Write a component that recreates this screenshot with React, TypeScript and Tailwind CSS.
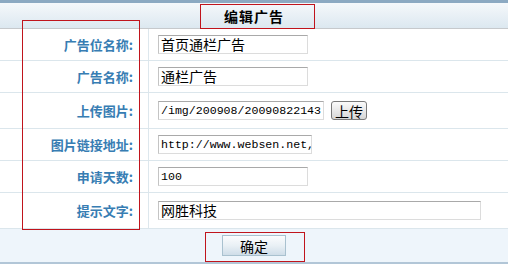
import React from "react"

const cjk = "font-['Noto_Sans_CJK_SC',sans-serif]"
const mono = "font-['Liberation_Mono','Noto_Sans_CJK_SC',monospace]"

interface Field {
  label: string
  value: string
  width: string
  latin?: boolean
  upload?: boolean
  height: string
}

const fields: Field[] = [
  { label: "广告位名称:", value: "首页通栏广告", width: "w-[150px]", height: "h-[32px]" },
  { label: "广告名称:", value: "通栏广告", width: "w-[150px]", height: "h-[32px]" },
  { label: "上传图片:", value: "/img/200908/20090822143", width: "w-[166px]", latin: true, upload: true, height: "h-[36px]" },
  { label: "图片链接地址:", value: "http://www.websen.net,", width: "w-[154px]", latin: true, height: "h-[32px]" },
  { label: "申请天数:", value: "100", width: "w-[150px]", latin: true, height: "h-[32px]" },
  { label: "提示文字:", value: "网胜科技", width: "w-[323px]", height: "h-[36px]" },
]

export default function App() {
  return (
    <div className={`relative w-[508px] h-[269px] bg-white ${cjk}`}>
      <div className="h-[3px] bg-[#8ca9c2]" />
      <div className="h-[26px] border-b border-[#c6c9cc] bg-gradient-to-b from-[#f5f8fb] to-[#dce8f0] flex items-center justify-center">
        <span className="text-[14px] font-bold tracking-[1px] text-black leading-none">编辑广告</span>
      </div>

      {fields.map((f) => (
        <div key={f.label} className={`flex ${f.height} border-b border-[#dbe6ec]`}>
          <div className="w-[149px] shrink-0 border-r border-[#dde7ed] flex items-center justify-end pr-[15px]">
            <span className="text-[13px] font-bold text-[#377db3] leading-none">{f.label}</span>
          </div>
          <div className="flex items-center pl-[9px] gap-[7px]">
            <input
              readOnly
              value={f.value}
              className={`${f.width} h-[19px] border border-[#dcdcdc] border-t-[#a9a9a9] border-l-[#c4c4c4] pl-[2px] pr-0 outline-none text-black ${
                f.latin ? `${mono} text-[11.6px]` : `${cjk} text-[14px]`
              }`}
            />
            {f.upload && (
              <button className="w-[36px] h-[19px] rounded-[3px] border border-[#7a7a7a] bg-gradient-to-b from-[#fbfbfb] to-[#d6d6d6] text-[14px] leading-none text-black">
                上传
              </button>
            )}
          </div>
        </div>
      ))}

      <div className="h-[35px] bg-[#eef5fb] border-b-2 border-[#b2c6d7] flex items-center justify-center">
        <button className="w-[64px] h-[21px] border border-[#a9c1cf] bg-gradient-to-b from-[#fbfcfd] via-[#e9f0f5] to-[#cfdde8] text-[14px] leading-none text-black">
          确定
        </button>
      </div>

      <div className="absolute left-[22px] top-[20px] w-[118px] h-[210px] border border-[#c0141c] pointer-events-none" />
      <div className="absolute left-[200px] top-[4px] w-[115px] h-[25px] border border-[#c0141c] pointer-events-none" />
      <div className="absolute left-[205px] top-[232px] w-[100px] h-[30px] border border-[#c0141c] pointer-events-none" />
    </div>
  )
}
